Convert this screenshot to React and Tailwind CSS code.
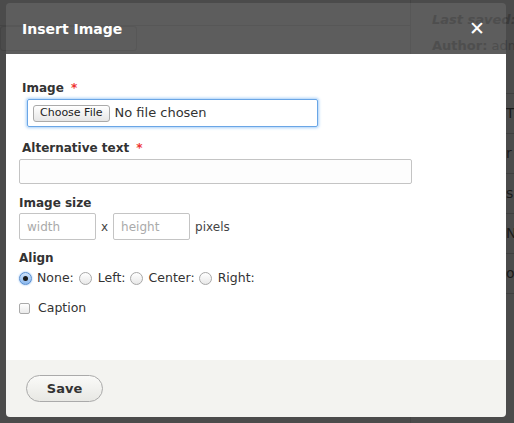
import React from "react";

const font = { fontFamily: '"DejaVu Sans", "Liberation Sans", sans-serif' };

const Radio = ({ checked }) => (
  <span
    className={`inline-flex items-center justify-center w-[13px] h-[13px] rounded-full border shrink-0 ${
      checked
        ? "border-[#5a8fd0] bg-gradient-to-b from-[#cfe3fb] to-[#8ab8ee] shadow-[0_0_2px_#7ab0f0]"
        : "border-[#a8a8a8] bg-gradient-to-b from-white to-[#e8e8e8]"
    }`}
  >
    {checked && <span className="w-[5px] h-[5px] rounded-full bg-[#1c1c1c]" />}
  </span>
);

const App = () => {
  return (
    <div className="relative w-[514px] h-[423px] bg-[#4b4b4b] overflow-hidden" style={font}>
      {/* page behind the overlay */}
      <div className="flex h-full">
        <div className="w-[410px] shrink-0 pt-[25px]">
          <div className="border-t border-[#444]" />
          <div className="w-[137px] h-[25px] border border-[#444] rounded-[3px]" />
        </div>
        <div className="flex-1 min-w-0 border-l border-[#444] overflow-hidden">
          <div className="h-[93px] pl-[21px] pt-[10px] text-[13px] text-[#3a3a3a]">
            <div className="italic font-bold whitespace-nowrap">
              Last saved: <span className="text-[#111]">Nov</span>
            </div>
            <div className="mt-[6px] whitespace-nowrap">
              <span className="font-bold">Author:</span> admin
            </div>
            <div className="mt-[4px] whitespace-nowrap text-[#222] pl-[84px]">ev</div>
          </div>
          {["T", "r", "s", "N", "o"].map((t, i) => (
            <div
              key={i}
              className="h-[40px] border-t border-[#3e3e3e] flex items-center pl-[95px] text-[14px] text-[#1a1a1a]"
            >
              {t}
            </div>
          ))}
          <div className="border-t border-[#3e3e3e]" />
        </div>
      </div>

      {/* modal */}
      <div className="absolute left-[6px] top-[3px] w-[500px] h-[414px] flex flex-col rounded-[4px] overflow-hidden">
        <div className="h-[51px] bg-white/[0.1] flex items-center justify-between pl-[16px] pr-[21px] shrink-0">
          <span className="text-white font-bold text-[14px] pt-[2px]">Insert Image</span>
          <span className="text-white font-bold text-[19px] leading-none">✕</span>
        </div>
        <div className="bg-white flex-1 pl-[13px] pt-[28px]">
          <div className="pl-[3px] text-[12px] font-bold text-[#333] leading-none">
            Image <span className="text-[#e33] ml-[3px]">*</span>
          </div>
          <div className="mt-[5px] ml-[8px] w-[291px] h-[28px] border border-[#6aa6e6] rounded-[2px] shadow-[0_0_3px_1px_#a8d0f8] flex items-center pl-[5px] gap-[5px]">
            <span className="h-[17px] px-[6px] border border-[#aaa] rounded-[3px] bg-gradient-to-b from-white to-[#e6e6e6] text-[11px] text-[#222] flex items-center">
              Choose File
            </span>
            <span className="text-[13px] text-[#333]">No file chosen</span>
          </div>

          <div className="mt-[15px] pl-[3px] text-[12px] font-bold text-[#333] leading-none">
            Alternative text <span className="text-[#e33] ml-[3px]">*</span>
          </div>
          <div className="mt-[5px] w-[393px] h-[25px] border border-[#c4c4c4] rounded-[2px] bg-[#fdfdfd]" />

          <div className="mt-[13px] text-[12px] font-bold text-[#333] leading-none">Image size</div>
          <div className="mt-[4px] flex items-center text-[12px] text-[#444]">
            <div className="w-[77px] h-[27px] border border-[#c4c4c4] rounded-[2px] flex items-center pl-[7px] text-[#aaa]">
              width
            </div>
            <span className="mx-[5px]">x</span>
            <div className="w-[77px] h-[27px] border border-[#c4c4c4] rounded-[2px] flex items-center pl-[7px] text-[#aaa]">
              height
            </div>
            <span className="ml-[5px]">pixels</span>
          </div>

          <div className="mt-[12px] text-[12px] font-bold text-[#333] leading-none">Align</div>
          <div className="mt-[5px] flex items-center text-[12.5px] text-[#333]">
            <Radio checked />
            <span className="ml-[5px] mr-[5px]">None:</span>
            <Radio />
            <span className="ml-[6px] mr-[4px]">Left:</span>
            <Radio />
            <span className="ml-[6px] mr-[4px]">Center:</span>
            <Radio />
            <span className="ml-[6px]">Right:</span>
          </div>

          <div className="mt-[11px] flex items-center text-[12.5px] text-[#333]">
            <span className="w-[11px] h-[11px] border border-[#aaa] rounded-[2px] bg-gradient-to-b from-white to-[#eaeaea]" />
            <span className="ml-[8px]">Caption</span>
          </div>
        </div>
        <div className="h-[57px] bg-[#f3f3f0] shrink-0 flex items-center pl-[20px]">
          <button className="w-[77px] h-[27px] rounded-full border border-[#aaa] bg-gradient-to-b from-[#fafaf8] to-[#e8e8e4] text-[13px] font-bold text-[#333]">
            Save
          </button>
        </div>
      </div>
    </div>
  );
};

export default App;
